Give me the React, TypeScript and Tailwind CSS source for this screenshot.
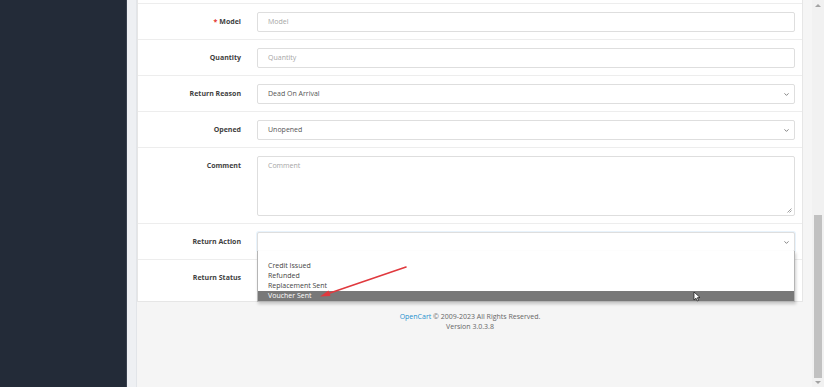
import React from 'react';
import { ChevronDown } from 'lucide-react';

const labelCls =
  'w-[119px] shrink-0 pr-[16px] h-[20px] flex items-center justify-end text-[7px] font-bold text-[#3f3f3f]';
const inputCls =
  'h-[20px] w-full border border-[#dedede] rounded-[2px] bg-white flex items-center pl-[10px] text-[7px]';

const Row: React.FC<{ label: React.ReactNode; children: React.ReactNode; last?: boolean }> = ({
  label,
  children,
  last,
}) => (
  <div className={`flex pt-[8px] ${last ? 'pb-[13px]' : 'pb-[7px] border-b border-[#ededed]'}`}>
    <div className={labelCls}>{label}</div>
    <div className="flex-1 min-w-0 mr-[7px] relative">{children}</div>
  </div>
);

const Select: React.FC<{ value?: string; focused?: boolean }> = ({ value, focused }) => (
  <div
    className={`${inputCls} relative text-[#555] ${
      focused ? 'border-[#a9cdee] shadow-[0_0_0_1px_rgba(102,175,233,0.15)]' : ''
    }`}
  >
    {value}
    <ChevronDown className="absolute right-[4px] top-[6px] w-[7px] h-[7px] text-[#555]" strokeWidth={2.5} />
  </div>
);

const options = ['', 'Credit Issued', 'Refunded', 'Replacement Sent', 'Voucher Sent'];

export default function App() {
  return (
    <div className="relative flex h-[387px] w-[824px] overflow-hidden bg-[#f5f5f5] font-['Open_Sans',sans-serif]">
      <aside className="w-[126px] shrink-0 bg-[#232b38]" />
      <div className="w-[11px] shrink-0 bg-[#eef0f3] border-l border-[#3a4250] border-r border-r-[#e2e5e9]" />

      <main className="flex-1 min-w-0 pr-[9px]">
        <div className="bg-white border-x border-b border-[#e6e6e6]">
          <div className="h-[4px] border-b border-[#ededed]" />
          <Row
            label={
              <>
                <span className="text-[#e3342f] mr-[2px]">*</span>Model
              </>
            }
          >
            <div className={`${inputCls} text-[#a6a6a6]`}>Model</div>
          </Row>
          <Row label="Quantity">
            <div className={`${inputCls} text-[#a6a6a6]`}>Quantity</div>
          </Row>
          <Row label="Return Reason">
            <Select value="Dead On Arrival" />
          </Row>
          <Row label="Opened">
            <Select value="Unopened" />
          </Row>
          <Row label="Comment">
            <div className="relative h-[60px] w-full border border-[#dedede] rounded-[2px] pl-[10px] pt-[4px] text-[7px] text-[#a6a6a6]">
              Comment
              <svg className="absolute right-[2px] bottom-[2px]" width="6" height="6" viewBox="0 0 6 6">
                <path d="M5.5 1.5 L1.5 5.5 M5.5 3.5 L3.5 5.5" stroke="#888" strokeWidth="0.8" />
              </svg>
            </div>
          </Row>
          <Row label="Return Action">
            <Select focused />
            <div className="absolute left-0 right-0 top-[19px] z-10 bg-white border-x border-b border-[#b5b5b5] shadow-[1px_2px_3px_rgba(0,0,0,0.2)]">
              {options.map((o, i) => (
                <div
                  key={i}
                  className={`h-[10px] leading-[10px] pl-[10px] text-[7px] ${
                    i === options.length - 1 ? 'bg-[#787878] text-white' : 'text-[#444]'
                  }`}
                >
                  {o}
                </div>
              ))}
            </div>
          </Row>
          <Row label="Return Status" last>
            <Select />
          </Row>
        </div>

        <footer className="mt-[10px] text-center text-[7px] leading-[10px] text-[#666]">
          <div>
            <span className="text-[#1e91cf]">OpenCart</span> © 2009-2023 All Rights Reserved.
          </div>
          <div>Version 3.0.3.8</div>
        </footer>
      </main>

      <div className="w-[12px] shrink-0 bg-[#f1f1f1] flex flex-col items-center">
        <div className="h-[10px] flex items-center">
          <div className="w-0 h-0 border-x-[3px] border-x-transparent border-b-[3px] border-b-[#a3a3a3]" />
        </div>
        <div className="h-[205px]" />
        <div className="h-[163px] w-[8px] bg-[#c1c1c1]" />
        <div className="flex-1 flex items-center">
          <div className="w-0 h-0 border-x-[3px] border-x-transparent border-t-[3px] border-t-[#a3a3a3]" />
        </div>
      </div>

      <svg className="absolute left-0 top-0 pointer-events-none z-20" width="824" height="387">
        <line x1="406" y1="267" x2="327" y2="294" stroke="#e0393e" strokeWidth="1.6" strokeLinecap="round" />
        <path d="M320 296.5 L328.5 290.5 L330.5 296 Z" fill="#e0393e" />
        <path
          d="M694 292 L694 300 L696 298.2 L697.4 301 L698.6 300.4 L697.3 297.7 L700 297.5 Z"
          fill="#fff"
          stroke="#111"
          strokeWidth="0.7"
          strokeLinejoin="round"
        />
      </svg>
    </div>
  );
}
